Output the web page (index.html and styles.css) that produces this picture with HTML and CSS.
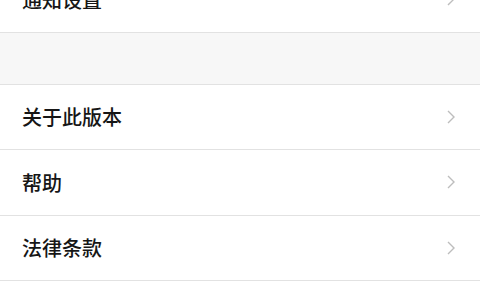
FILE: index.html
```html
<!DOCTYPE html>
<html lang="zh-CN">
<head>
  <meta charset="UTF-8">
  <title>设置</title>
  <link rel="stylesheet" href="styles.css">
</head>
<body>

  <!-- Notification group -->
  <div class="group group-first">
    <div class="row">
      <span class="label">通知设置</span>
      <svg class="chevron" viewBox="0 0 8 14"><path d="M1 1 L7 7 L1 13"/></svg>
    </div>
  </div>

  <div class="spacer"></div>

  <!-- About group -->
  <div class="group">
    <div class="row">
      <span class="label">关于此版本</span>
      <svg class="chevron" viewBox="0 0 8 14"><path d="M1 1 L7 7 L1 13"/></svg>
    </div>
    <div class="row">
      <span class="label">帮助</span>
      <svg class="chevron" viewBox="0 0 8 14"><path d="M1 1 L7 7 L1 13"/></svg>
    </div>
    <div class="row">
      <span class="label">法律条款</span>
      <svg class="chevron" viewBox="0 0 8 14"><path d="M1 1 L7 7 L1 13"/></svg>
    </div>
    <div class="row">
      <span class="label">意见反馈</span>
      <svg class="chevron" viewBox="0 0 8 14"><path d="M1 1 L7 7 L1 13"/></svg>
    </div>
  </div>

</body>
</html>
```

FILE: styles.css
```css
/* General Styles */
body {
  margin: 0;
  padding: 0;
  background-color: #f7f7f7;
  font-family: "Noto Sans CJK SC", "Noto Sans", sans-serif;
  color: #161616;
  overflow: hidden;
}

/* Groups */
.group {
  background-color: #fff;
  border-top: 1px solid #e2e2e2;
}

.group-first {
  margin-top: -33px;
  border-top: none;
}

.spacer {
  height: 51px;
}

/* Rows */
.row {
  display: flex;
  align-items: center;
  justify-content: space-between;
  height: 64.5px;
  padding: 0 22px;
  border-bottom: 1px solid #e2e2e2;
}

.label {
  font-size: 20px;
  font-weight: 500;
}

.chevron {
  width: 8px;
  height: 14px;
  margin-right: 3px;
  fill: none;
  stroke: #bdbdbd;
  stroke-width: 1.4;
}
```
